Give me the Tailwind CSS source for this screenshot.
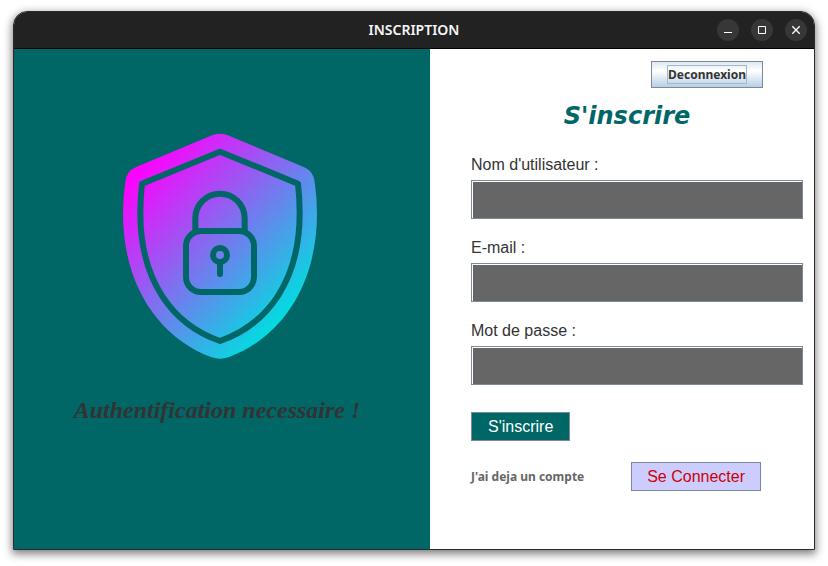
<!DOCTYPE html>
<html lang="fr">
<head>
<meta charset="utf-8">
<meta name="viewport" content="width=device-width, initial-scale=1">
<title>INSCRIPTION</title>
<script src="https://cdn.jsdelivr.net/npm/@tailwindcss/browser@4"></script>
</head>
<body class="bg-white min-h-screen flex flex-col pt-[11px] pb-4 pl-[13px] pr-[13px] font-['Liberation_Sans',Arial,sans-serif] text-[#333333]">
<div class="grow flex flex-col rounded-t-[14px] border border-[#2b2b2b] overflow-hidden shadow-[0_3px_9px_1px_rgba(0,0,0,0.5)]">
  <header class="grid grid-cols-[1fr_auto_1fr] items-center h-[37px] shrink-0 bg-[#222222] border-b border-black text-white">
    <span></span>
    <span class="font-['Noto_Sans',sans-serif] font-semibold text-[14px] leading-5 text-[#f6f6f6]">INSCRIPTION</span>
    <div class="flex justify-end gap-3 pr-[7px]">
      <button type="button" aria-label="Réduire" class="size-[22px] rounded-full bg-[#373737]"><svg class="size-[22px]" viewBox="0 0 22 22" fill="none" stroke="#fff"><path d="M7 13.5h8"/></svg></button>
      <button type="button" aria-label="Agrandir" class="size-[22px] rounded-full bg-[#373737]"><svg class="size-[22px]" viewBox="0 0 22 22" fill="none" stroke="#fff"><path d="M7.5 7.5h7v7h-7z"/></svg></button>
      <button type="button" aria-label="Fermer" class="size-[22px] rounded-full bg-[#373737]"><svg class="size-[22px]" viewBox="0 0 22 22" fill="none" stroke="#fff" stroke-width="1.3"><path d="M7.3 7.3l7.4 7.4M14.7 7.3l-7.4 7.4"/></svg></button>
    </div>
  </header>
  <main class="grow grid grid-cols-[52fr_48fr]">
    <section class="bg-[#006666] flex flex-col items-center pt-[71px]">
      <svg class="w-[220px] h-[250px] ml-[-4px]" viewBox="0 0 660 750" fill="none" aria-hidden="true">
        <defs>
          <linearGradient id="shade" gradientUnits="userSpaceOnUse" x1="100" y1="125" x2="560" y2="560">
            <stop offset="0" stop-color="#ff00ff"/>
            <stop offset="1" stop-color="#00dee0"/>
          </linearGradient>
        </defs>
        <path fill="url(#shade)" d="M308 45Q330 37 352 45L583 142Q610 154 614 185Q621 230 621 280C621 500 510 655 355 712Q330 720 305 712C150 655 39 500 39 280Q39 230 46 185Q50 154 77 142Z"/>
        <g stroke="#006666" stroke-width="18" stroke-linecap="round" stroke-linejoin="round">
          <path d="M330 95L564 191Q569 235 569 280C569 480 475 612 330 663C185 612 91 480 91 280Q91 235 96 191Z"/>
          <path d="M256 333V295a74 74 0 0 1 148 0V333"/>
          <rect x="228" y="333" width="204" height="183" rx="45"/>
          <circle cx="330" cy="405" r="21"/>
          <path d="M330 428V462"/>
        </g>
      </svg>
      <p class="mt-6 font-['Liberation_Serif',serif] font-bold italic text-[24px] leading-8 ml-[-10px]">Authentification necessaire !</p>
    </section>
    <section class="bg-white pl-[41px] pr-[11px] pt-3">
      <div class="flex justify-end pr-10">
        <button type="button" class="h-[27px] px-[15px] border border-[#7a8a99] bg-linear-to-b from-[#dde8f3] via-white via-35% to-[#b8cfe5] font-['Noto_Sans',sans-serif] font-bold text-[12px] leading-[17px]"><span class="block border border-[#a3b8cc]">Deconnexion</span></button>
      </div>
      <h1 class="mt-3 pr-5 text-center font-['DejaVu_Sans',sans-serif] font-bold italic text-[24px] leading-8 text-[#006666]">S'inscrire</h1>
      <form class="mt-[21px]">
        <div class="flex flex-col gap-[17px]">
          <div class="flex flex-col gap-[3px]">
            <label for="user" class="text-[16px] leading-6">Nom d'utilisateur :</label>
            <input id="user" type="text" class="h-[39px] w-full border border-[#7a8a99] bg-[#666666] px-2 text-white outline-none shadow-[inset_1px_1px_0_#fff]">
          </div>
          <div class="flex flex-col gap-[3px]">
            <label for="mail" class="text-[16px] leading-6">E-mail :</label>
            <input id="mail" type="email" class="h-[39px] w-full border border-[#7a8a99] bg-[#666666] px-2 text-white outline-none shadow-[inset_1px_1px_0_#fff]">
          </div>
          <div class="flex flex-col gap-[3px]">
            <label for="pass" class="text-[16px] leading-6">Mot de passe :</label>
            <input id="pass" type="password" class="h-[39px] w-full border border-[#7a8a99] bg-[#666666] px-2 text-white outline-none shadow-[inset_1px_1px_0_#fff]">
          </div>
        </div>
        <button type="submit" class="block mt-[27px] h-[29px] px-4 border border-[#7a8a99] bg-[#006666] text-white text-[16px] leading-6">S'inscrire</button>
        <div class="mt-[21px] flex items-center justify-between pr-[42px]">
          <span class="font-['Noto_Sans',sans-serif] font-bold text-[12px] leading-[17px] text-[#666666]">J'ai deja un compte</span>
          <button type="button" class="h-[29px] px-[15px] border border-[#7a8a99] bg-[#ccccff] text-[#cc0000] text-[16px] leading-6">Se Connecter</button>
        </div>
      </form>
    </section>
  </main>
</div>
</body>
</html>
